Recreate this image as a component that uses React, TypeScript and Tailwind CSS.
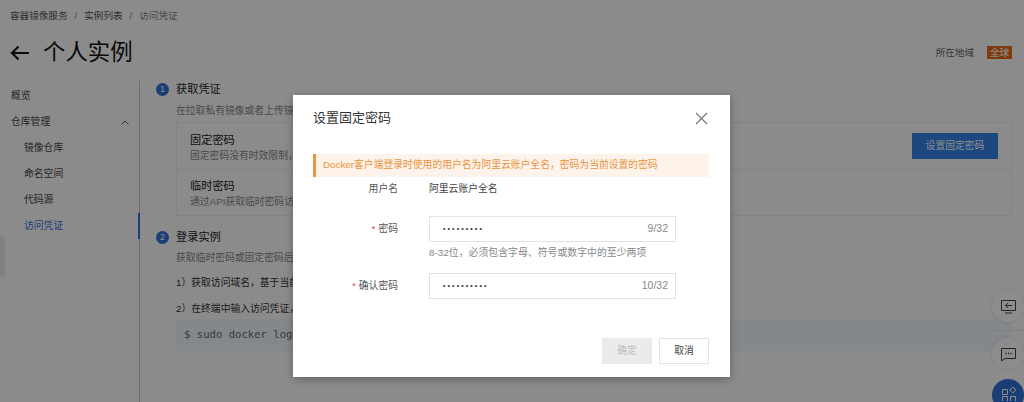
import React from "react";

const font = { fontFamily: '"Liberation Sans","Noto Sans CJK SC",sans-serif' };

function Step({ n, title }: { n: number; title: string }) {
  return (
    <div className="flex items-center h-[14px]">
      <span className="w-[13px] h-[13px] rounded-full bg-[#2f6fd6] text-white text-[9px] leading-[13px] text-center">{n}</span>
      <span className="ml-[7px] text-[11.2px] text-[#222]">{title}</span>
    </div>
  );
}

function Field({ label, count, dots, help }: { label: string; count: string; dots: string; help?: string }) {
  return (
    <div className="flex">
      <div className="w-[85px] h-[26px] flex items-center justify-end text-[#555] text-[9.8px]">
        <span className="text-[#e0463a] mr-[3px]">*</span>
        {label}
      </div>
      <div className="ml-[31px]">
        <div className="w-[247px] h-[26px] border border-[#e3e3e3] flex items-center justify-between pl-[13px] pr-[7px]">
          <span className="text-[#333] text-[7px] tracking-[2.1px]">{dots}</span>
          <span className="text-[#888] text-[10.5px]">{count}</span>
        </div>
        {help && <div className="mt-[5px] h-[12px] leading-[12px] text-[9.9px] text-[#888] whitespace-nowrap">{help}</div>}
      </div>
    </div>
  );
}

export default function App() {
  return (
    <div style={font} className="relative w-[1024px] h-[402px] overflow-hidden bg-[#fdfdfd] text-[#333]">
      <header className="px-[10px] pt-[10px] h-[81px]">
        <div className="flex items-center h-[12px] text-[9.6px] text-[#555]">
          <span>容器镜像服务</span>
          <span className="mx-[7px] text-[#888]">/</span>
          <span>实例列表</span>
          <span className="mx-[7px] text-[#888]">/</span>
          <span className="text-[#888]">访问凭证</span>
        </div>
        <div className="flex items-center justify-between mt-[17px] h-[28px] pr-[2px]">
          <div className="flex items-center">
            <svg width="20" height="16" viewBox="0 0 20 16" fill="none" stroke="#111" strokeWidth="2.2">
              <path d="M19 8H2M8.5 1.5 2 8l6.5 6.5" />
            </svg>
            <h1 className="ml-[13px] text-[22.4px] leading-[28px] text-[#111]">个人实例</h1>
          </div>
          <div className="flex items-center">
            <span className="text-[9.6px] text-[#666]">所在地域</span>
            <span className="ml-[13px] w-[25px] h-[13px] bg-[#ea6a1e] text-white text-[9.6px] leading-[13px] text-center">全球</span>
          </div>
        </div>
      </header>

      <main className="flex h-[321px]">
        <aside className="w-[140px] border-r border-[#c8c8c8] pt-[2px] text-[9.8px] text-[#444]">
          <div className="h-[26px] leading-[26px] pl-[11px]">概览</div>
          <div className="h-[26px] flex items-center justify-between pl-[11px] pr-[10px]">
            <span>仓库管理</span>
            <svg width="8" height="5" viewBox="0 0 8 5" fill="none" stroke="#666" strokeWidth="1"><path d="M.5 4.5 4 1l3.5 3.5" /></svg>
          </div>
          <div className="h-[26px] leading-[26px] pl-[24px]">镜像仓库</div>
          <div className="h-[26px] leading-[26px] pl-[24px]">命名空间</div>
          <div className="h-[26px] leading-[26px] pl-[24px]">代码源</div>
          <div className="h-[26px] leading-[26px] pl-[24px] text-[#2f6fd6] border-r-2 border-[#2f6fd6] -mr-px">访问凭证</div>
        </aside>

        <section className="flex-1 pl-[16px] pr-[12px] pt-[1px]">
          <Step n={1} title="获取凭证" />
          <p className="ml-[20px] mt-[9px] h-[12px] leading-[12px] text-[9.8px] text-[#888] whitespace-nowrap">在拉取私有镜像或者上传镜像</p>
          <div className="ml-[20px] mt-[5px] border border-[#eee]">
            <div className="h-[47px] flex justify-between pl-[13px] pr-[13px] pt-[10px] border-b border-[#eee]">
              <div>
                <div className="text-[11.2px] leading-[14px] text-[#222]">固定密码</div>
                <div className="mt-[3px] text-[9.8px] leading-[12px] text-[#888] whitespace-nowrap">固定密码没有时效限制，</div>
              </div>
              <button className="w-[86px] h-[26px] bg-[#3383e8] text-white text-[9.8px]">设置固定密码</button>
            </div>
            <div className="h-[45px] pl-[13px] pt-[9px]">
              <div className="text-[11.2px] leading-[14px] text-[#222]">临时密码</div>
              <div className="mt-[3px] text-[9.8px] leading-[12px] text-[#888] whitespace-nowrap">通过API获取临时密码访问</div>
            </div>
          </div>
          <div className="mt-[14px]"><Step n={2} title="登录实例" /></div>
          <p className="ml-[20px] mt-[8px] h-[12px] leading-[12px] text-[9.8px] text-[#888] whitespace-nowrap">获取临时密码或固定密码后，</p>
          <p className="ml-[20px] mt-[13px] h-[12px] leading-[12px] text-[9.8px] text-[#333] whitespace-nowrap">1）获取访问域名，基于当前实例</p>
          <p className="ml-[20px] mt-[14px] h-[12px] leading-[12px] text-[9.8px] text-[#333] whitespace-nowrap">2）在终端中输入访问凭证，</p>
          <div className="ml-[20px] mt-[4px] h-[32px] pl-[8px] flex items-center bg-[#f3f8fd] text-[10.6px] text-[#666]" style={{ fontFamily: '"DejaVu Sans Mono",monospace' }}>$ sudo docker login</div>
        </section>
      </main>

      <div className="absolute left-0 top-[236px] w-[5px] h-[41px] bg-[#ebebeb] rounded-r-[2px]" />

      <div className="absolute left-[992px] top-[330px] w-[32px] h-px bg-[#e8e8e8]" />
      <div className="absolute left-[992px] top-[290px] flex flex-col gap-[16px]">
        <div className="w-[32px] h-[32px] rounded-full bg-white shadow-[0_0_4px_rgba(0,0,0,0.1)] flex items-center justify-start pl-[9px]">
          <svg width="15" height="15" viewBox="0 0 15 15" fill="none" stroke="#444" strokeWidth="1"><path d="M.5 1.5h14v10H.5zM4 14h7M11 6.5H4.5M7 4 4.5 6.5 7 9" /></svg>
        </div>
        <div className="w-[32px] h-[32px] rounded-full bg-white shadow-[0_0_4px_rgba(0,0,0,0.1)] flex items-center justify-start pl-[9px]">
          <svg width="15" height="15" viewBox="0 0 15 15" fill="none" stroke="#444" strokeWidth="1"><path d="M.5 1.5h14v10H4l-3.5 2.5z" /><path d="M4.5 6.5h1.2M7 6.5h1.2M9.5 6.5h1.2" strokeWidth="1.4" /></svg>
        </div>
      </div>
      <div className="absolute left-[992px] top-[379px] w-[32px] h-[32px] rounded-full bg-[#2f6fd6] pl-[10px] pt-[8px]">
        <svg width="14" height="14" viewBox="0 0 14 14" fill="none" stroke="#fff" strokeWidth="1"><path d="M.5 2.5h5v5h-5zM.5 9.5h5v5h-5zM8.5 9.5h5v5h-5zM10.8 0l3 3-3 3-3-3z" /></svg>
      </div>

      <div className="absolute inset-0 bg-black/45 flex items-start justify-center pt-[95px] pr-px">
        <div className="w-[437px] h-[282px] bg-white pl-[20px] pr-[21px] shadow-[0_2px_8px_rgba(0,0,0,0.3)]">
          <div className="h-[46px] flex items-center justify-between pr-px">
            <h2 className="text-[13px] text-[#333]">设置固定密码</h2>
            <svg width="13" height="13" viewBox="0 0 13 13" fill="none" stroke="#777" strokeWidth="1.2"><path d="M1 1l11 11M12 1 1 12" /></svg>
          </div>
          <div className="mt-[13px] h-[23px] border-l-[3px] border-[#e9953f] bg-[#fdf3ea] pl-[7px] flex items-center text-[9.8px] text-[#e9953f] whitespace-nowrap">Docker客户端登录时使用的用户名为阿里云账户全名，密码为当前设置的密码</div>
          <div className="flex h-[25px] items-center text-[9.8px] text-[#555]">
            <div className="w-[85px] text-right">用户名</div>
            <div className="ml-[31px] text-[#444]">阿里云账户全名</div>
          </div>
          <div className="mt-[14px]"><Field label="密码" count="9/32" dots="•••••••••" help="8-32位，必须包含字母、符号或数字中的至少两项" /></div>
          <div className="mt-[14px]"><Field label="确认密码" count="10/32" dots="••••••••••" /></div>
          <div className="mt-[39px] flex justify-end gap-[7px]">
            <button className="w-[50px] h-[26px] bg-[#ebebeb] text-[#bbb] text-[9.8px]">确定</button>
            <button className="w-[50px] h-[26px] border border-[#e3e3e3] text-[#444] text-[9.8px]">取消</button>
          </div>
        </div>
      </div>
    </div>
  );
}
